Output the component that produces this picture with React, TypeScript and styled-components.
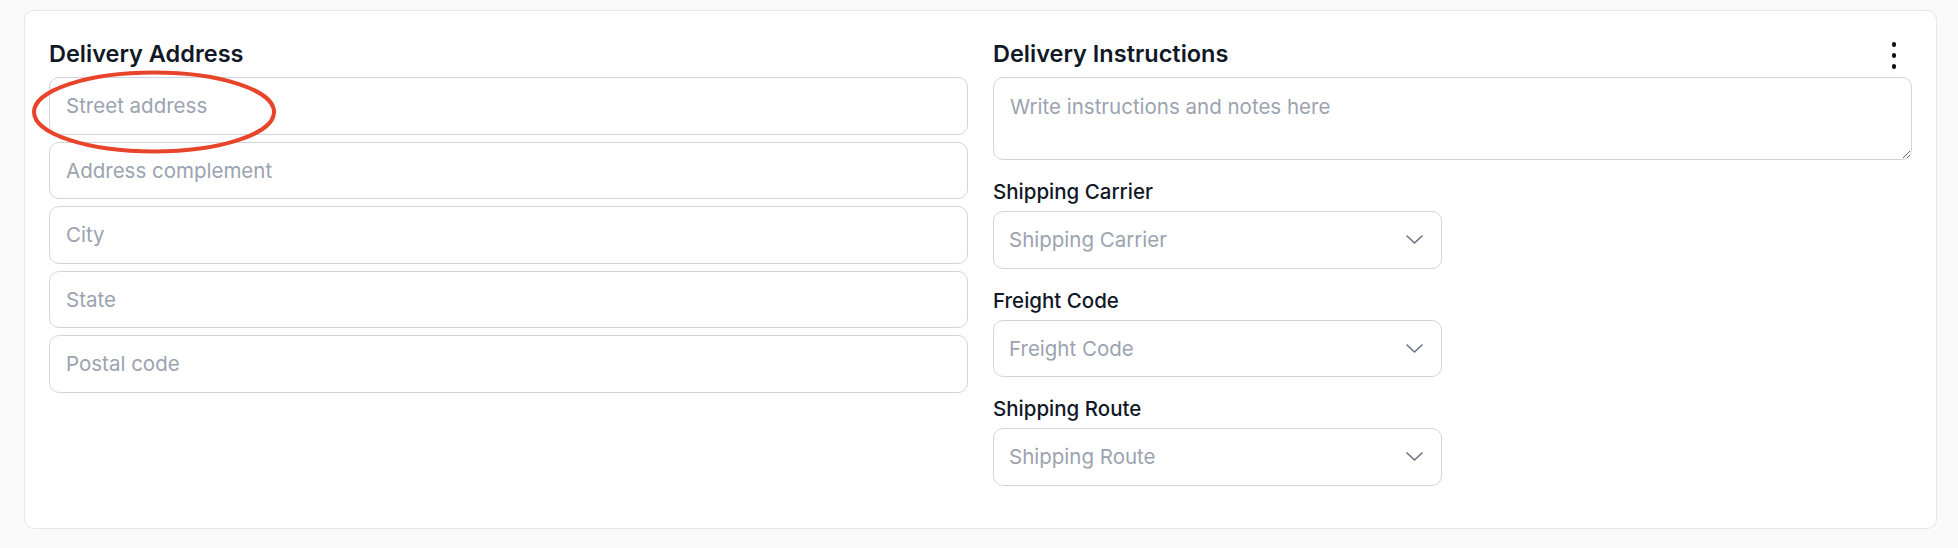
import styled, { createGlobalStyle } from "styled-components";

const GlobalStyle = createGlobalStyle`
  body {
    margin: 0;
    background: #fafafa;
    font-family: Inter, "Noto Sans", sans-serif;
  }
`;

const addressFields = [
  "Street address",
  "Address complement",
  "City",
  "State",
  "Postal code",
];

const selectFields = ["Shipping Carrier", "Freight Code", "Shipping Route"];

function Chevron() {
  return (
    <svg width="17" height="9" viewBox="0 0 17 9" fill="none">
      <path
        d="M1 1l7.5 7 7.5-7"
        stroke="#6b7280"
        strokeWidth="1.6"
        strokeLinecap="round"
        strokeLinejoin="round"
      />
    </svg>
  );
}

function App() {
  return (
    <Page>
      <GlobalStyle />
      <Card>
        <Column>
          <Heading>Delivery Address</Heading>
          <Stack>
            {addressFields.map((field) => (
              <Input key={field} placeholder={field} />
            ))}
          </Stack>
          <Highlight width="250" height="88" viewBox="0 0 250 88">
            <ellipse
              cx="124"
              cy="44"
              rx="120"
              ry="39.5"
              fill="none"
              stroke="#e8442b"
              strokeWidth="4"
            />
          </Highlight>
        </Column>

        <Column>
          <HeaderRow>
            <Heading>Delivery Instructions</Heading>
            <MenuButton aria-label="More options">
              <Dot />
              <Dot />
              <Dot />
            </MenuButton>
          </HeaderRow>
          <TextArea placeholder="Write instructions and notes here" />
          {selectFields.map((field) => (
            <FieldGroup key={field}>
              <Label>{field}</Label>
              <FieldGrid>
                <SelectBox>
                  <span>{field}</span>
                  <Chevron />
                </SelectBox>
              </FieldGrid>
            </FieldGroup>
          ))}
        </Column>
      </Card>
    </Page>
  );
}

const Page = styled.div`
  padding: 10px 21px 19px 24px;
`;

const Card = styled.div`
  background: #ffffff;
  border: 1px solid #e5e7eb;
  border-radius: 10px;
  padding: 25px 24px 42px;
  display: grid;
  grid-template-columns: 1fr 1fr;
  column-gap: 25px;
`;

const Column = styled.div`
  position: relative;
  display: flex;
  flex-direction: column;
  min-width: 0;
`;

const HeaderRow = styled.div`
  display: flex;
  align-items: center;
  justify-content: space-between;
`;

const Heading = styled.h2`
  margin: 0 0 6px;
  font-size: 23.5px;
  line-height: 35px;
  font-weight: 600;
  color: #111827;
`;

const MenuButton = styled.button`
  display: flex;
  flex-direction: column;
  align-items: center;
  gap: 6.5px;
  padding: 0;
  margin: 0 16px 2px 0;
  border: 0;
  background: none;
  cursor: pointer;
`;

const Dot = styled.span`
  width: 4.5px;
  height: 4.5px;
  border-radius: 50%;
  background: #111111;
`;

const Stack = styled.div`
  display: flex;
  flex-direction: column;
  gap: 7px;
`;

const fieldBase = `
  box-sizing: border-box;
  width: 100%;
  border: 1px solid #d1d5db;
  border-radius: 10px;
  background: #ffffff;
  font-family: Inter, "Noto Sans", sans-serif;
  font-size: 20.5px;
  color: #111827;
  outline: none;
  &::placeholder {
    color: #9ca3af;
  }
`;

const Input = styled.input`
  ${fieldBase}
  height: 57.5px;
  padding: 0 16px;
`;

const TextArea = styled.textarea`
  ${fieldBase}
  display: block;
  height: 83px;
  padding: 14px 16px;
  line-height: 30px;
  resize: vertical;
`;

const FieldGroup = styled.div`
  display: flex;
  flex-direction: column;
  gap: 7px;
  margin-top: 19px;
`;

const Label = styled.label`
  font-size: 20.5px;
  line-height: 25px;
  font-weight: 500;
  color: #111827;
`;

const FieldGrid = styled.div`
  display: grid;
  grid-template-columns: 1fr 1fr;
  gap: 21px;
`;

const SelectBox = styled.div`
  ${fieldBase}
  height: 57.5px;
  padding: 0 18px 0 15px;
  display: flex;
  align-items: center;
  justify-content: space-between;
  color: #9ca3af;
  cursor: pointer;
`;

const Highlight = styled.svg`
  position: absolute;
  left: -19px;
  top: 32px;
  pointer-events: none;
`;

export default App;
